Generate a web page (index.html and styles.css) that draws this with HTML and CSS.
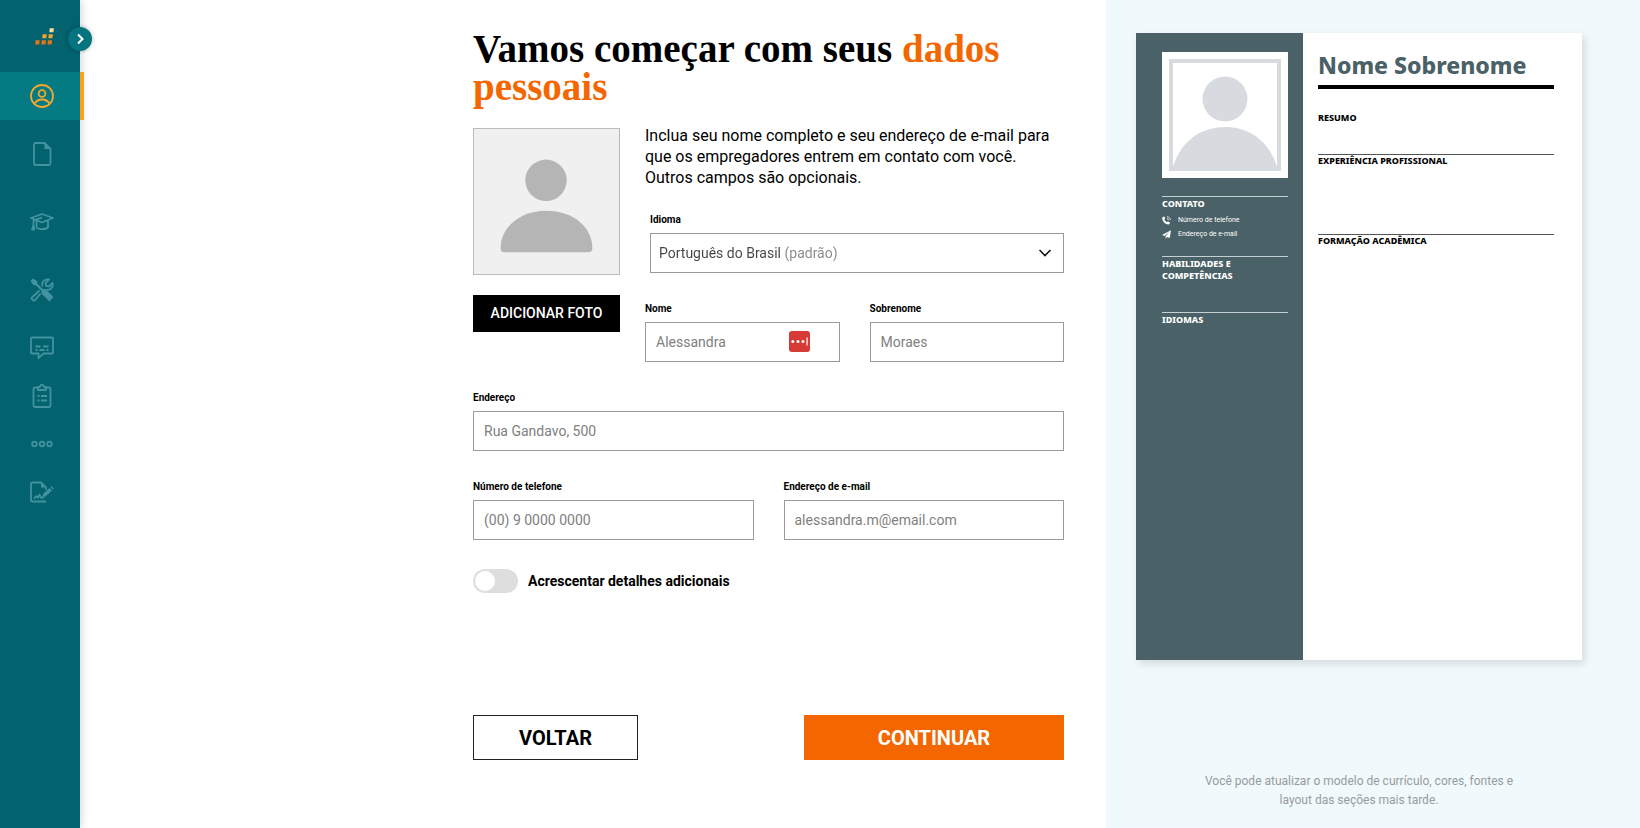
FILE: index.html
```
<!DOCTYPE html>
<html lang="pt-BR">
<head>
    <meta charset="UTF-8">
    <meta name="viewport" content="width=device-width, initial-scale=1.0">
    <title>Dados pessoais</title>

    <link rel="stylesheet" href="styles.css">
</head>
<body>
    <div class="layout">
        <aside class="sidebar">
            <a href="#home" class="logo" aria-label="Início">
                <svg width="20" height="17" viewBox="0 0 20 17">
                    <path fill="#e3761b" d="M.5 12.2h4.2l-.4 4.3H.2zM6.7 12.2h4.2l-.4 4.3H6.4zM12.9 12.2h4.2l-.5 4.3h-4.1z"/>
                    <path fill="#f0a232" d="M7.6 6.2h4.2l-.5 4h-4.1zM13.7 6.2h4.2l-.5 4h-4.1z"/>
                    <path fill="#f3dfa2" d="M14.7.3h4.2l-.5 3.9h-4.1z"/>
                </svg>
            </a>
            <button type="button" class="expand" aria-label="Expandir menu">
                <svg width="24" height="24" viewBox="0 0 24 24"><path d="M10 7.5l4.5 4.5-4.5 4.5" fill="none" stroke="#fff" stroke-width="2"/></svg>
            </button>
            <nav class="steps">
                <!-- Dados pessoais -->
                <a href="#dados" class="step active" aria-label="Dados pessoais">
                    <svg viewBox="0 0 24 24"><circle cx="12" cy="12" r="11"/><circle cx="12" cy="9.5" r="3.4"/><path d="M4.6 19.5c1.6-2.6 4.2-4 7.4-4s5.8 1.4 7.4 4"/></svg>
                </a>
                <!-- Arquivo -->
                <a href="#experiencia" class="step tall" aria-label="Experiência profissional">
                    <svg viewBox="0 0 24 24"><path d="M5.5 1h9l6 6v14.500a1.500 1.500 0 0 1-1.500 1.500H5.500A1.500 1.500 0 0 1 4 21.500v-19A1.500 1.500 0 0 1 5.500 1z"/><path class="solid" d="M14.500 1v6h6z"/></svg>
                </a>
                <!-- Formação -->
                <a href="#formacao" class="step tall" aria-label="Formação acadêmica">
                    <svg viewBox="0 0 24 24"><path d="M12 4l11 4-11 4.500L1 8zM12 7.700l-8.500 2.600v5M6.500 11v6.500c2 2.300 9 2.300 11.500 0V11M3.500 15l-1.500 4.500h2.300z"/></svg>
                </a>
                <!-- Habilidades -->
                <a href="#habilidades" class="step tall" aria-label="Habilidades">
                    <svg viewBox="0 0 24 24">
                        <path d="M12.500 8.500C11 4.500 14.500.500 19 1.500l-3.500 3.700.600 2.600 2.800.700L22.500 5c1.200 4.500-2.500 7.600-6 6.700M9.500 12.500l-7.600 7c-1 1 1.400 4 2.800 2.800l6-6.800"/>
                        <path class="solid" d="M.5 2.700L2.800.5l4.200 2.600.5 2.700 5.500 5.500 2.500-.2 8 8-4 4.500-8-8 .1-2.700L6 7.400l-2.700-.5z"/>
                    </svg>
                </a>
                <!-- Resumo -->
                <a href="#resumo" class="step" aria-label="Resumo">
                    <svg viewBox="0 0 24 24"><path d="M2 1.500h20a1 1 0 0 1 1 1v14a1 1 0 0 1-1 1h-8.500l-5 4.700v-4.700H2a1 1 0 0 1-1-1v-14a1 1 0 0 1 1-1zM5.500 10.500h5M13 10.500h5.500M5.500 14h2M9.500 14h5M16.500 14h2"/></svg>
                </a>
                <!-- Revisão -->
                <a href="#revisao" class="step" aria-label="Revisão">
                    <svg viewBox="0 0 24 24"><path d="M8 3.500H5A1.500 1.500 0 0 0 3.500 5v16.500A1.500 1.500 0 0 0 5 23h14a1.500 1.500 0 0 0 1.500-1.500V5A1.500 1.500 0 0 0 19 3.500h-3M8 3h2c.3-3 3.700-3 4 0h2v3H8zM7.500 12h2M11 12h6M7.500 16.500h2M11 16.500h6"/></svg>
                </a>
                <!-- Mais -->
                <a href="#mais" class="step" aria-label="Mais">
                    <svg viewBox="0 0 24 24"><circle cx="4.500" cy="12" r="2.300"/><circle cx="12" cy="12" r="2.300"/><circle cx="19.500" cy="12" r="2.300"/></svg>
                </a>
                <!-- Assinar -->
                <a href="#finalizar" class="step" aria-label="Finalizar">
                    <svg viewBox="0 0 24 24"><path d="M16 21.500H2.500A1.500 1.500 0 0 1 1 20V4a1.500 1.500 0 0 1 1.500-1.500H11l5 5V10M4 18.500l2.500-2.300 1.500 1.500 1.500-3 1.500 3h3"/><path class="solid" d="M11 2.500v5h5zM12.500 17l.5-3 6.500-6 2.500 2.500-6.500 6zM20.500 7.200l1-1 2.300 2.400-1 1z"/></svg>
                </a>
            </nav>
        </aside>

        <main>
            <form class="content">
                <h1>Vamos começar com seus <span>dados</span> <span>pessoais</span></h1>

                <div class="intro">
                    <div class="photo">
                        <div class="photo-box">
                            <svg viewBox="0 0 147 147"><circle cx="73" cy="52" r="21"/><path d="M27 121C27 100 46 83 73.500 83S120 100 120 121q0 4-4 4H31q-4 0-4-4z"/></svg>
                        </div>
                        <button type="button" class="photo-btn">ADICIONAR FOTO</button>
                    </div>

                    <div class="intro-fields">
                        <p>Inclua seu nome completo e seu endereço de e-mail para que os empregadores entrem em contato com você. Outros campos são opcionais.</p>

                        <div class="field language">
                            <label for="idioma">Idioma</label>
                            <div class="control">
                                <select id="idioma" name="idioma">
                                    <option selected>Português do Brasil (padrão)</option>
                                </select>
                                <svg class="arrow" width="14" height="10" viewBox="0 0 14 10"><path d="M1.500 2L7 7.500 12.500 2" fill="none" stroke="#111" stroke-width="1.600"/></svg>
                            </div>
                        </div>

                        <div class="row">
                            <div class="field">
                                <label for="nome">Nome</label>
                                <div class="control">
                                    <input type="text" id="nome" name="nome" placeholder="Alessandra">
                                    <!-- Gerenciador de senhas -->
                                    <svg class="autofill" width="21" height="21" viewBox="0 0 21 21"><rect width="21" height="21" rx="3" fill="#d73a36"/><g fill="#fff"><circle cx="3.800" cy="10.500" r="1.500"/><circle cx="9" cy="10.500" r="1.500"/><circle cx="14" cy="10.500" r="1.500"/><path d="M17.500 6.500h1.200v8h-1.200z"/></g></svg>
                                </div>
                            </div>
                            <div class="field">
                                <label for="sobrenome">Sobrenome</label>
                                <input type="text" id="sobrenome" name="sobrenome" placeholder="Moraes">
                            </div>
                        </div>
                    </div>
                </div>

                <div class="field">
                    <label for="endereco">Endereço</label>
                    <input type="text" id="endereco" name="endereco" placeholder="Rua Gandavo, 500">
                </div>

                <div class="row">
                    <div class="field">
                        <label for="telefone">Número de telefone</label>
                        <input type="tel" id="telefone" name="telefone" placeholder="(00) 9 0000 0000">
                    </div>
                    <div class="field">
                        <label for="email">Endereço de e-mail</label>
                        <input type="email" id="email" name="email" placeholder="alessandra.m@email.com">
                    </div>
                </div>

                <div class="details">
                    <input type="checkbox" id="detalhes" name="detalhes" class="switch">
                    <label for="detalhes">Acrescentar detalhes adicionais</label>
                </div>

                <!-- Botões -->
                <div class="form-buttons">
                    <button type="button" class="back-btn">VOLTAR</button>
                    <button type="submit" class="next-btn">CONTINUAR</button>
                </div>
            </form>
        </main>

        <section class="preview">
            <div class="resume">
                <div class="resume-side">
                    <div class="resume-photo">
                        <svg viewBox="0 0 104 104"><circle cx="52" cy="36" r="22.500"/><path d="M0 104C7 80 26 64 52 64s45 16 52 40z"/></svg>
                    </div>
                    <div class="resume-block contact">
                        <h3>CONTATO</h3>
                        <p><svg width="9" height="9" viewBox="0 0 9 9"><path fill="#fff" d="M.3 1.200L2.200.4l1.100 2.200-1 .9c.5 1.200 1.400 2.100 2.600 2.700l1-1 2.100 1.200-.7 1.900C3.500 9-.2 5 .3 1.200z"/><path d="M5 .7C7 .9 8.200 2.100 8.400 4M5 2.500c1 .1 1.500.7 1.600 1.600" fill="none" stroke="#fff" stroke-width=".8"/></svg>Número de telefone</p>
                        <p><svg width="9" height="9" viewBox="0 0 9 9"><path fill="#fff" d="M9 .3L7.700 8 5 6.900 3.700 8.700V6.300L7.300 2 2.600 5.900 0 4.900z"/></svg>Endereço de e-mail</p>
                    </div>
                    <div class="resume-block skills">
                        <h3>HABILIDADES E COMPETÊNCIAS</h3>
                    </div>
                    <div class="resume-block">
                        <h3>IDIOMAS</h3>
                    </div>
                </div>
                <div class="resume-main">
                    <h2>Nome Sobrenome</h2>
                    <h3 class="summary">RESUMO</h3>
                    <h3 class="work">EXPERIÊNCIA PROFISSIONAL</h3>
                    <h3>FORMAÇÃO ACADÊMICA</h3>
                </div>
            </div>
            <p class="note">Você pode atualizar o modelo de currículo, cores, fontes e layout das seções mais tarde.</p>
        </section>
    </div>
</body>
</html>
```
FILE: styles.css
```
/* Style geral */
* {
    box-sizing: border-box;
}

body {
    font-family: Roboto, Arial, sans-serif;
    margin: 0;
    background-color: #fff;
    color: #000;
}

h1, h2, h3, p {
    margin: 0;
}

button, input, select {
    font-family: inherit;
}

button {
    cursor: pointer;
}

.layout {
    display: grid;
    grid-template-columns: 80px minmax(0, 1fr) 534px;
    min-height: 100vh;
}

/* Menu lateral */
.sidebar {
    position: relative;
    background-color: #02626d;
    box-shadow: 2px 0 8px rgba(0, 0, 0, 0.15);
}

.logo {
    display: flex;
    align-items: center;
    height: 72px;
    padding-left: 35px;
}

.expand {
    position: absolute;
    top: 27px;
    right: -12px;
    z-index: 1;
    width: 24px;
    height: 24px;
    padding: 0;
    border: none;
    border-radius: 50%;
    background-color: #04757e;
    box-shadow: 0 0 4px rgba(0, 0, 0, 0.3);
}

.steps {
    display: flex;
    flex-direction: column;
    width: 84px;
}

.step {
    display: flex;
    align-items: center;
    justify-content: center;
    height: 48px;
    color: #4392a1;
}

.step.tall {
    height: 68px;
}

.step.active {
    background: linear-gradient(to right, #047a82 80px, #f9a11f 80px);
    color: #f4a72c;
}

.step svg {
    width: 24px;
    height: 24px;
    fill: none;
    stroke: currentColor;
    stroke-width: 1.8;
    stroke-linejoin: round;
}

.step .solid {
    fill: currentColor;
    stroke: none;
}

/* Formulário */
.content {
    display: flex;
    flex-direction: column;
    gap: 29px;
    max-width: 591px;
    margin: 0 42px 0 auto;
    padding: 30px 0 40px;
}

h1 {
    font-family: "Source Serif Pro", "Liberation Serif", serif;
    font-size: 39px;
    line-height: 38px;
    font-weight: bold;
    margin-bottom: -10px;
}

h1 span {
    color: #f46700;
}

.intro {
    display: flex;
    gap: 25px;
}

.photo {
    width: 147px;
    padding-top: 3px;
}

.photo-box {
    border: 1px solid #bbb;
    background-color: #f0f0f0;
    margin-bottom: 20px;
}

.photo-box svg {
    display: block;
    fill: #b5b5b5;
}

.photo-btn {
    width: 100%;
    height: 37px;
    padding: 0 0 2px;
    border: none;
    background-color: #000;
    color: #fff;
    font-size: 14px;
    font-weight: 500;
}

.intro-fields {
    flex: 1;
}

.intro-fields p {
    font-size: 16px;
    line-height: 21px;
    margin-bottom: 25px;
}

.field {
    flex: 1;
    display: flex;
    flex-direction: column;
    gap: 6px;
}

.field label {
    font-size: 10px;
    line-height: 14px;
    font-weight: bold;
}

.field input,
.field select {
    width: 100%;
    height: 40px;
    padding: 0 10px;
    border: 1px solid #9b9b9b;
    border-radius: 0;
    background-color: #fff;
    color: #444;
    font-size: 14px;
}

.field input::placeholder {
    color: #808080;
}

.language {
    margin: 0 0 29px 5px;
}

.control {
    position: relative;
}

/* "(padrão)" fica mais claro que o nome do idioma */
.field select {
    display: block;
    appearance: none;
    padding: 0 8px;
    background: linear-gradient(to right, #444 131px, #888 131px);
    background-clip: text;
    color: transparent;
}

.arrow {
    position: absolute;
    top: 15px;
    right: 12px;
    pointer-events: none;
}

.autofill {
    position: absolute;
    top: 9px;
    right: 30px;
}

.row {
    display: flex;
    gap: 30px;
}

.details {
    display: flex;
    align-items: center;
    gap: 10px;
    font-size: 14px;
    font-weight: bold;
}

.switch {
    appearance: none;
    display: flex;
    align-items: center;
    width: 45px;
    height: 24px;
    margin: 0;
    padding: 2px;
    border-radius: 12px;
    background-color: #dedede;
    cursor: pointer;
}

.switch::before {
    content: "";
    width: 20px;
    height: 20px;
    border-radius: 50%;
    background-color: #fff;
}

.switch:checked {
    justify-content: flex-end;
    background-color: #04757e;
}

.form-buttons {
    display: flex;
    justify-content: space-between;
    margin-top: 93px;
}

.form-buttons button {
    height: 45px;
    font-size: 20px;
    font-weight: bold;
}

.form-buttons .back-btn {
    width: 165px;
    border: 1px solid #222;
    background-color: #fff;
    color: #000;
}

.form-buttons .next-btn {
    width: 260px;
    border: none;
    background-color: #f46700;
    color: #fff;
}

/* Pré-visualização */
.preview {
    display: flex;
    flex-direction: column;
    justify-content: space-between;
    padding: 33px 58px 18px 30px;
    background-color: #f0f9fb;
}

.resume {
    display: flex;
    aspect-ratio: 446 / 627;
    background-color: #fff;
    box-shadow: 3px 4px 8px rgba(0, 0, 0, 0.12);
    font-family: "Noto Sans", sans-serif;
}

.resume h3 {
    font-size: 9px;
    line-height: 12px;
    font-weight: 800;
}

.resume-side {
    width: 167px;
    padding: 19px 15px 0 26px;
    background-color: #4a6167;
    color: #fff;
}

.resume-photo {
    padding: 7px;
    margin-bottom: 18px;
    background-color: #fff;
}

.resume-photo svg {
    display: block;
    border: 4px solid #d7dbe0;
    fill: #d7dbe0;
}

.resume-block {
    padding-top: 1px;
    border-top: 1px solid #c5d0d2;
}

.contact {
    min-height: 60px;
}

.contact p {
    display: flex;
    align-items: center;
    gap: 7px;
    font-family: Roboto, Arial, sans-serif;
    font-size: 7px;
    line-height: 14px;
}

.contact h3 {
    margin-bottom: 3px;
}

.skills {
    min-height: 56px;
}

.resume-main {
    flex: 1;
    padding: 17px 28px 0 15px;
}

.resume-main h2 {
    padding-bottom: 4px;
    border-bottom: 4px solid #000;
    color: #4a6167;
    font-size: 23px;
    line-height: 31px;
    font-weight: 800;
}

.resume-main h3 {
    border-top: 1px solid #555;
}

.resume-main .summary {
    border: none;
    padding-top: 23px;
    margin-bottom: 30px;
}

.resume-main .work {
    margin-bottom: 67px;
}

.note {
    width: 320px;
    align-self: center;
    color: #979c9e;
    font-size: 12px;
    line-height: 19px;
    text-align: center;
}

@media (max-width: 1200px) {
    .layout {
        grid-template-columns: 80px minmax(0, 1fr);
    }

    .content {
        margin: 0 auto;
    }

    .preview {
        display: none;
    }
}
```
